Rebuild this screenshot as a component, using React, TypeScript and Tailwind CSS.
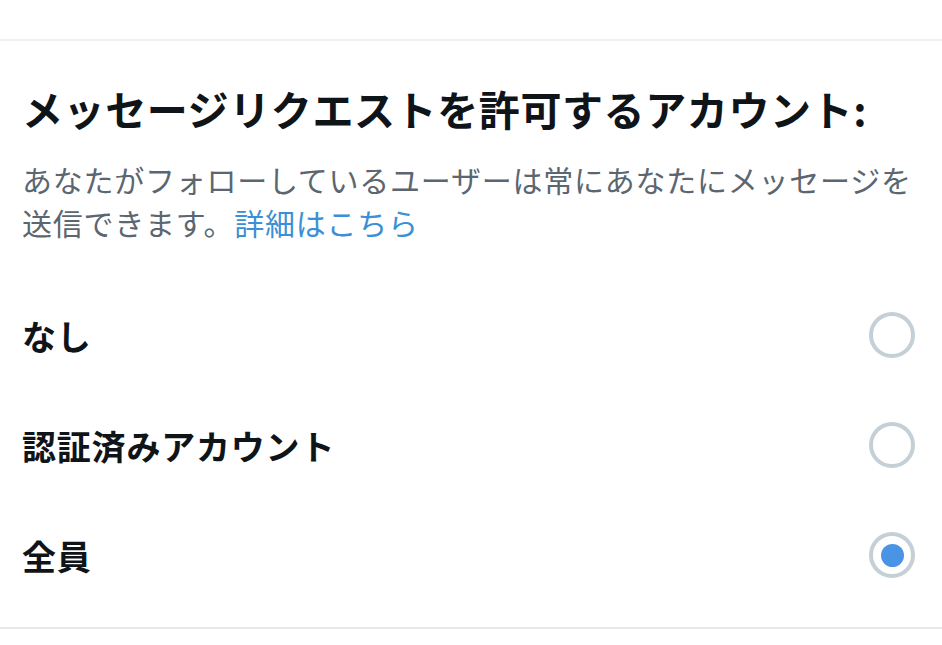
const options = [
  { label: "なし", checked: false },
  { label: "認証済みアカウント", checked: false },
  { label: "全員", checked: true },
];

const Radio = ({ checked }: { checked: boolean }) => (
  <div className="w-[46px] h-[46px] rounded-full border-[4px] border-[#c5cfd6] flex items-center justify-center">
    {checked && <div className="w-[23px] h-[23px] rounded-full bg-[#4a94e6]" />}
  </div>
);

export default function App() {
  return (
    <div
      className="w-[942px] h-[645px] bg-white overflow-hidden flex flex-col"
      style={{ fontFamily: '"Noto Sans CJK JP", "Noto Sans", sans-serif' }}
    >
      <div className="h-[41px] border-b-2 border-[#eff1f2]" />

      <div className="px-[22px] pt-[39px]">
        <h1 className="text-[41px] leading-[56px] font-bold text-[#0f1419] tracking-[0.6px] whitespace-nowrap">
          メッセージリクエストを許可するアカウント:
        </h1>
        <p className="mt-[22px] text-[30px] leading-[43px] text-[#5b6670] tracking-[0.75px]">
          あなたがフォローしているユーザーは常にあなたにメッセージを送信できます。
          <span className="text-[#3b8fd6]">詳細はこちら</span>
        </p>
      </div>

      <div className="mt-[36px] flex flex-col">
        {options.map((o) => (
          <div key={o.label} className="h-[110px] pl-[22px] pr-[27px] flex items-center justify-between">
            <span className="text-[34px] font-bold text-[#0f1419] tracking-[0.8px]">{o.label}</span>
            <Radio checked={o.checked} />
          </div>
        ))}
      </div>

      <div className="mt-[17px] border-b-2 border-[#e6e8ea]" />
    </div>
  );
}
